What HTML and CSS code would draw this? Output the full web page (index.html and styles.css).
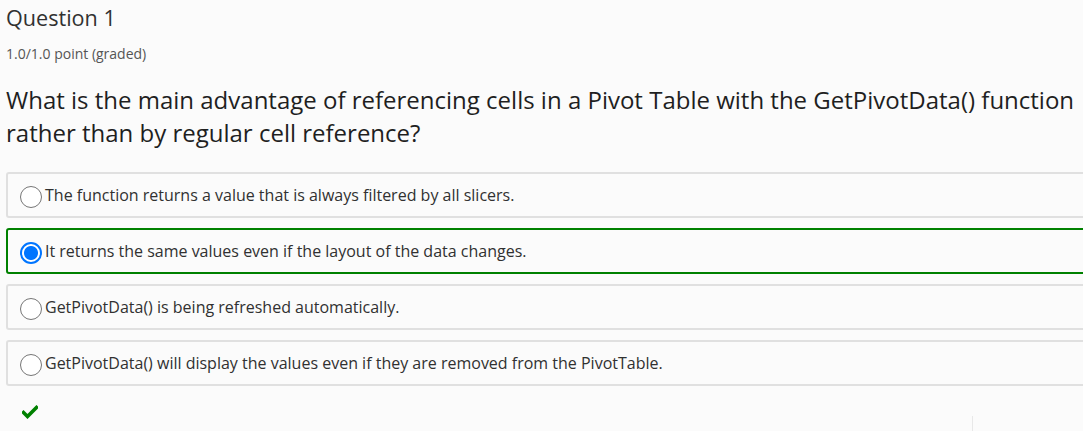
FILE: index.html
```html
<!DOCTYPE html>
<html>
<head>
<meta charset="utf-8">
<link rel="stylesheet" href="styles.css">
</head>
<body>
<div class="problem">
  <h2 class="title">Question 1</h2>
  <div class="points">1.0/1.0 point (graded)</div>
  <p class="question">What is the main advantage of referencing cells in a Pivot Table with the GetPivotData() function rather than by regular cell reference?</p>
  <div class="choices">
    <label class="choice"><input type="radio" name="q1" class="radio"><span>The function returns a value that is always filtered by all slicers.</span></label>
    <label class="choice correct"><input type="radio" name="q1" class="radio" checked><span>It returns the same values even if the layout of the data changes.</span></label>
    <label class="choice"><input type="radio" name="q1" class="radio"><span>GetPivotData() is being refreshed automatically.</span></label>
    <label class="choice"><input type="radio" name="q1" class="radio"><span>GetPivotData() will display the values even if they are removed from the PivotTable.</span></label>
  </div>
  <div class="status">
    <svg width="16" height="14" viewBox="0 0 16 14"><path d="M1.5 7.5 L5.5 11.5 L14.5 2.5" fill="none" stroke="#008100" stroke-width="3.6" stroke-linecap="square"/></svg>
  </div>
  <div class="footer"><span class="divider"></span></div>
</div>
</body>
</html>
```

FILE: styles.css
```css
html, body {
  margin: 0;
  padding: 0;
  background: #fbfbfb;
  overflow: hidden;
}
body {
  font-family: "Open Sans", "DejaVu Sans", sans-serif;
  color: #313131;
}
.problem {
  padding-left: 6px;
  width: 1100px;
}
.title {
  margin: 0;
  padding-top: 3px;
  font-size: 21.6px;
  font-weight: 400;
  line-height: 30px;
  color: #313131;
}
.points {
  margin-top: 12px;
  font-size: 14px;
  line-height: 18px;
  color: #555;
}
.question {
  margin: 20px 0 0 0;
  font-size: 24px;
  line-height: 33px;
  color: #1f1f1f;
  width: 1075px;
}
.choices {
  margin-top: 23px;
  display: flex;
  flex-direction: column;
  gap: 10px;
}
.choice {
  display: flex;
  align-items: center;
  height: 42px;
  border: 2px solid #e0e0e0;
  border-radius: 3px;
  background: #fbfbfb;
  padding-left: 12px;
  font-size: 16px;
  color: #313131;
}
.choice.correct {
  border-color: #008100;
}
.radio {
  appearance: none;
  -webkit-appearance: none;
  margin: 3px 3px 0 0;
  width: 22px;
  height: 22px;
  border: 1px solid #767676;
  border-radius: 50%;
  background: #fff;
  box-sizing: border-box;
}
.radio:checked {
  border: 2px solid #0075ff;
  background: radial-gradient(circle, #0075ff 0 6.5px, #fff 7.5px);
}
.status {
  padding: 16px 0 0 16px;
  height: 22px;
}
.footer {
  height: 20px;
  position: relative;
}
.divider {
  position: absolute;
  left: 966px;
  top: -8px;
  width: 1px;
  height: 20px;
  background: #e8e8e8;
}
```
